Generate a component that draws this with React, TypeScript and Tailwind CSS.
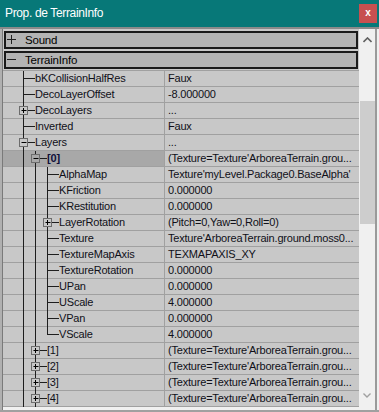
import React from "react";

type Row = {
  name: string;
  value: string;
  lvl: 1 | 2 | 3;
  box?: "plus" | "minus";
  last?: boolean;
  sel?: boolean;
};

const TEX = "(Texture=Texture'ArboreaTerrain.grou...";

const rows: Row[] = [
  { name: "bKCollisionHalfRes", value: "Faux", lvl: 1 },
  { name: "DecoLayerOffset", value: "-8.000000", lvl: 1 },
  { name: "DecoLayers", value: "...", lvl: 1, box: "plus" },
  { name: "Inverted", value: "Faux", lvl: 1 },
  { name: "Layers", value: "...", lvl: 1, box: "minus" },
  { name: "[0]", value: TEX, lvl: 2, box: "minus", sel: true },
  { name: "AlphaMap", value: "Texture'myLevel.Package0.BaseAlpha'", lvl: 3 },
  { name: "KFriction", value: "0.000000", lvl: 3 },
  { name: "KRestitution", value: "0.000000", lvl: 3 },
  { name: "LayerRotation", value: "(Pitch=0,Yaw=0,Roll=0)", lvl: 3, box: "plus" },
  { name: "Texture", value: "Texture'ArboreaTerrain.ground.moss0...", lvl: 3 },
  { name: "TextureMapAxis", value: "TEXMAPAXIS_XY", lvl: 3 },
  { name: "TextureRotation", value: "0.000000", lvl: 3 },
  { name: "UPan", value: "0.000000", lvl: 3 },
  { name: "UScale", value: "4.000000", lvl: 3 },
  { name: "VPan", value: "0.000000", lvl: 3 },
  { name: "VScale", value: "4.000000", lvl: 3, last: true },
  { name: "[1]", value: TEX, lvl: 2, box: "plus" },
  { name: "[2]", value: TEX, lvl: 2, box: "plus" },
  { name: "[3]", value: TEX, lvl: 2, box: "plus" },
  { name: "[4]", value: TEX, lvl: 2, box: "plus" },
];

// tree connector lines drawn for one row (x 0 in svg == x 3 on screen)
const TreeLines = ({ row, bg }: { row: Row; bg: string }) => {
  const w = 20 + row.lvl * 12;
  const lx = (l: number) => 20 + (l - 1) * 12 + 0.5;
  const own = lx(row.lvl);
  const levels = Array.from({ length: row.lvl }, (_, i) => i + 1);

  return (
    <svg width={w} height={16} className="shrink-0 self-start overflow-visible">
      {levels.map((l) => (
        <line
          key={l}
          x1={lx(l)}
          x2={lx(l)}
          y1={0}
          y2={l === row.lvl && row.last ? 8 : 16}
          stroke="#1e1e1e"
        />
      ))}
      <line x1={own} x2={w} y1={7.5} y2={7.5} stroke="#1e1e1e" />
      {row.box && (
        <g>
          <rect x={own - 4} y={3.5} width={8} height={8} fill={bg} stroke="#6c6c6c" />
          <line x1={own - 2} x2={own + 3} y1={7.5} y2={7.5} stroke="#000" />
          {row.box === "plus" && (
            <line x1={own} x2={own} y1={5} y2={10} stroke="#000" />
          )}
        </g>
      )}
    </svg>
  );
};

const Category = ({ label, open }: { label: string; open?: boolean }) => (
  <div className="mx-[1px] h-[18px] border-2 border-[#1a1a1a] bg-[#b4b4b4] flex items-center">
    <svg width={10} height={10} className="ml-[1px] shrink-0">
      <line x1={0} x2={9} y1={4.5} y2={4.5} stroke="#222" />
      {!open && <line x1={4.5} x2={4.5} y1={0} y2={9} stroke="#222" />}
    </svg>
    <span className="ml-[8px] text-[11.5px] leading-[14px] tracking-[-0.2px] text-black">{label}</span>
  </div>
);

export default function App() {
  return (
    <div className="w-[379px] h-[412px] flex flex-col bg-[#f0f0f0] font-['Liberation_Sans',Arial,sans-serif] overflow-hidden select-none">
      {/* title bar */}
      <div className="h-[27px] shrink-0 bg-[#077878] flex items-start">
        <span className="pl-[5px] pt-[6px] text-[12px] leading-[15px] tracking-[-0.35px] text-white">
          Prop. de TerrainInfo
        </span>
        <div className="ml-auto mt-[4px] mr-[2px] w-[18px] h-[19px] bg-[#c75050] flex items-center justify-center">
          <span className="text-white text-[10px] font-bold leading-none -mt-[1px]">x</span>
        </div>
      </div>
      <div className="h-[2px] shrink-0 bg-[#8a8a8a]" />

      <div className="flex flex-1 min-h-0">
        <div className="w-[2px] bg-[#b0b0b0]" />
        <div className="w-[357px] border-l border-[#7a7a7a] bg-[#c8c8c8] flex flex-col pt-[2px]">
          <Category label="Sound" />
          <div className="h-[2px]" />
          <Category label="TerrainInfo" open />
          <div className="h-[1px]" />
          <div className="border-t border-[#a0a0a0]">
            {rows.map((r) => {
              const bg = r.sel ? "#a8a8a8" : "#c8c8c8";
              return (
                <div key={r.name} className="h-[16px] flex border-b border-[#a0a0a0] text-[11px] leading-[15px] tracking-[-0.2px]">
                  <div
                    className={
                      "w-[162px] shrink-0 flex border-r border-[#a0a0a0] " +
                      (r.sel ? "bg-[#a8a8a8]" : "bg-[#c8c8c8]")
                    }
                  >
                    <TreeLines row={r} bg={bg} />
                    <span
                      className={
                        "whitespace-nowrap " +
                        (r.sel ? "font-bold text-[#10103a]" : "text-[#101018]")
                      }
                    >
                      {r.name}
                    </span>
                  </div>
                  <div className="flex-1 min-w-0 pl-[3px] whitespace-nowrap overflow-hidden text-[#101018]">
                    {r.value}
                  </div>
                </div>
              );
            })}
          </div>
          <div className="flex-1 bg-[#f0f0f0]" />
        </div>

        {/* scrollbar */}
        <div className="w-[16px] bg-[#f0f0f0] flex flex-col items-stretch">
          <div className="h-[20px] flex items-center justify-center pt-[2px]">
            <svg width={9} height={6}>
              <polyline points="0.5,5 4.5,1 8.5,5" fill="none" stroke="#606060" strokeWidth={1.6} />
            </svg>
          </div>
          <div className="h-[52px]" />
          <div className="ml-[1px] h-[123px] bg-[#cdcdcd]" />
          <div className="flex-1" />
          <div className="h-[22px] flex items-center justify-center pb-[8px]">
            <svg width={8} height={5}>
              <polyline points="0.5,0.5 4,4 7.5,0.5" fill="none" stroke="#a0a0a0" strokeWidth={1.4} />
            </svg>
          </div>
        </div>
        <div className="w-[2px] bg-[#9a9a9a]" />
        <div className="w-[2px] bg-[#f0f0f0]" />
      </div>
      <div className="h-[2px] shrink-0 bg-[#a0a0a0]" />
    </div>
  );
}
